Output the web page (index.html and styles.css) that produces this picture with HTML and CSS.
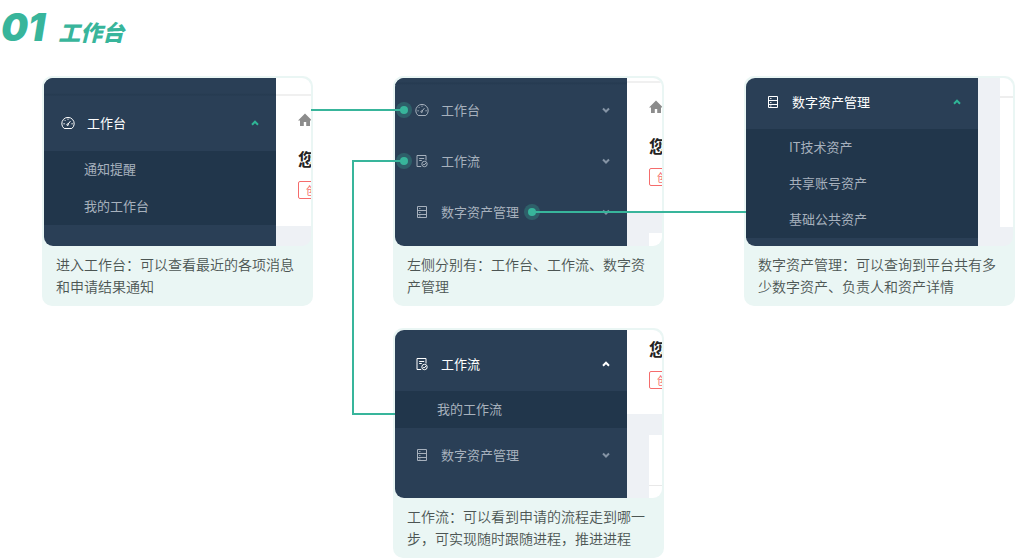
FILE: index.html
```html
<!DOCTYPE html>
<html lang="zh-CN">
<head>
<meta charset="utf-8">
<meta name="viewport" content="width=device-width, initial-scale=1">
<title>工作台</title>
<link rel="stylesheet" href="styles.css">
</head>
<body>
<svg class="defs" aria-hidden="true">
  <symbol id="gauge" viewBox="0 0 14 14"><path d="M3.2 12.5h7.6a6.2 6.2 0 1 0-7.6 0zM6.8 8.4l2.6-3.2M7 2.6v1.2M3.8 4.2l.8.8M2.4 7.8h1.4M10.4 7.8h1.4"/><circle cx="6.6" cy="8.7" r=".8"/></symbol>
  <symbol id="flow" viewBox="0 0 14 14"><path d="M6.2 12.5H2v-11h9v5M4.2 4.5h5M4.2 6.5h2.6"/><circle cx="9.5" cy="10" r="2.7"/><path d="M8.2 10l1 1 1.7-2"/></symbol>
  <symbol id="assets" viewBox="0 0 14 14"><path d="M2.5 1.5h9v11h-9zM2.5 5.5h9M2.5 9.5h9M4.2 3.5h1.2M4.2 7.5h1.2M4.2 11h1.2"/></symbol>
  <symbol id="down" viewBox="0 0 8 8"><path d="M1 2.5l3 3 3-3"/></symbol>
  <symbol id="up" viewBox="0 0 8 8"><path d="M1 5.7l3-3 3 3"/></symbol>
  <symbol id="home" viewBox="0 0 14 14"><path d="M7 .5L0 7.5h2V13h3.8V9h2.4v4H12V7.5h2z"/></symbol>
</svg>
<header class="heading">
  <span class="heading-number">01</span>
  <h1 class="heading-title">工作台</h1>
</header>
<main class="board">
  <article class="card">
    <div class="screen">
      <nav class="sidebar">
        <div class="strip strip-tall"></div>
        <button class="item item-medium active"><svg class="icon"><use href="#gauge"/></svg><span>工作台</span><svg class="arrow green"><use href="#up"/></svg></button>
        <div class="submenu"><a href="#">通知提醒</a><a href="#">我的工作台</a></div>
      </nav>
      <div class="content">
        <div class="topbar topbar-tall"></div>
        <div class="hero hero-first"><svg class="home"><use href="#home"/></svg><strong>您</strong><span class="tag">创</span></div>
      </div>
    </div>
    <p class="caption">进入工作台：可以查看最近的各项消息和申请结果通知</p>
  </article>

  <article class="card">
    <div class="screen">
      <nav class="sidebar">
        <div class="strip"></div>
        <button class="item"><svg class="icon"><use href="#gauge"/></svg><span>工作台</span><svg class="arrow"><use href="#down"/></svg></button>
        <button class="item"><svg class="icon"><use href="#flow"/></svg><span>工作流</span><svg class="arrow"><use href="#down"/></svg></button>
        <button class="item"><svg class="icon"><use href="#assets"/></svg><span>数字资产管理</span><svg class="arrow"><use href="#down"/></svg></button>
      </nav>
      <div class="content">
        <div class="topbar"></div>
        <div class="hero"><svg class="home"><use href="#home"/></svg><strong>您</strong><span class="tag">创</span></div>
        <div class="panel"></div>
      </div>
    </div>
    <p class="caption">左侧分别有：工作台、工作流、数字资产管理</p>
    <i class="wire wire-desk"></i>
    <i class="wire wire-flow"></i>
    <i class="wire-bend"></i>
    <i class="wire wire-assets"></i>
  </article>

  <article class="card">
    <div class="screen">
      <nav class="sidebar">
        <button class="item item-top active"><svg class="icon"><use href="#assets"/></svg><span>数字资产管理</span><svg class="arrow green"><use href="#up"/></svg></button>
        <div class="submenu submenu-three"><a href="#">IT技术资产</a><a href="#">共享账号资产</a><a href="#">基础公共资产</a></div>
      </nav>
      <div class="content">
        <div class="panel panel-long"></div>
      </div>
    </div>
    <p class="caption">数字资产管理：可以查询到平台共有多少数字资产、负责人和资产详情</p>
  </article>

  <article class="card card-flow">
    <div class="screen">
      <nav class="sidebar">
        <button class="item item-tall active"><svg class="icon"><use href="#flow"/></svg><span>工作流</span><svg class="arrow"><use href="#up"/></svg></button>
        <div class="submenu submenu-flow"><a href="#">我的工作流</a></div>
        <button class="item item-after"><svg class="icon"><use href="#assets"/></svg><span>数字资产管理</span><svg class="arrow"><use href="#down"/></svg></button>
      </nav>
      <div class="content">
        <div class="hero hero-last"><strong>您</strong><span class="tag">创</span></div>
        <div class="panel panel-split"></div>
      </div>
    </div>
    <p class="caption">工作流：可以看到申请的流程走到哪一步，可实现随时跟随进程，推进进程</p>
  </article>
</main>
</body>
</html>
```
FILE: styles.css
```css
:root {
  --green: #38b59b;
  --mint: #eaf6f4;
  --navy: #2a3f56;
  --deep: #21364b;
}

* { box-sizing: border-box; }

body {
  margin: 0;
  background: #fff;
  font-family: "Noto Sans CJK SC", sans-serif;
}

.defs { display: none; }

.heading {
  display: flex;
  align-items: baseline;
  gap: 13px;
  height: 76px;
  padding: 4px 0 0 1px;
  color: var(--green);
  font-style: italic;
  font-weight: 900;
  line-height: 46px;
}

.heading-number { font-family: Inter, sans-serif; font-size: 38px; }
.heading-title { margin: 0; font-size: 22px; font-weight: 900; }

.board {
  display: grid;
  grid-template-columns: repeat(3, minmax(0, 1fr));
  gap: 22px 80px;
  padding-left: 42px;
}

.card {
  position: relative;
  padding: 2px;
  border-radius: 10px;
  background: var(--mint);
}

.card-flow { grid-column: 2; }

.screen {
  display: flex;
  height: 168px;
  overflow: hidden;
  border-radius: 9px;
  background: #eef1f5;
}

.sidebar {
  flex: 0 0 232px;
  background: var(--navy);
}

.strip { height: 7px; background: linear-gradient(#2a3f56 4px, #253a50 5px, #2a3f56 7px); }
.strip-tall { height: 18px; background: linear-gradient(#2a3f56 15px, #253a50 17px, #2a3f56 18px); }

.item {
  display: flex;
  align-items: center;
  gap: 12px;
  width: 100%;
  height: 51px;
  padding: 0 17px 2px 20px;
  border: 0;
  background: none;
  color: #a7b1bd;
  font: 13px/20px "Noto Sans CJK SC", sans-serif;
  text-align: left;
}

.item.active { color: #fff; }
.item-medium { height: 55px; padding-left: 17px; }
.item-top { padding-bottom: 4px; }
.item-tall { height: 61px; padding-top: 6px; padding-bottom: 0; }
.item-after { height: 54px; padding-bottom: 0; }

.icon, .arrow {
  flex: none;
  fill: none;
  stroke: currentColor;
}

.icon { width: 14px; height: 14px; }
.arrow { width: 8px; height: 8px; margin-left: auto; stroke-width: 2; }
.item .green { color: #2fb596; }
.item:not(.active) .arrow { color: #8594a5; }

.submenu {
  display: grid;
  grid-auto-rows: 37px;
  padding-left: 40px;
  background: var(--deep);
}

.submenu a {
  color: #a7b1bd;
  font-size: 13px;
  line-height: 35px;
  text-decoration: none;
}

.submenu-three { grid-auto-rows: 36px; padding-bottom: 1px; padding-left: 43px; }
.submenu-flow { padding-left: 42px; }

.content {
  flex: 1;
  min-width: 0;
  overflow: hidden;
}

.topbar { height: 5px; border-bottom: 2px solid #f0f0f0; background: #fff; }
.topbar-tall { height: 18px; }

.hero {
  display: flex;
  flex-direction: column;
  align-items: flex-start;
  height: 129px;
  padding: 17px 0 0 22px;
  background: #fff;
}

.hero-first { height: 130px; }
.hero-last { height: 84px; padding-top: 7px; }
.home { flex: none; width: 14px; height: 14px; margin-bottom: 20px; fill: #8c8c8c; }

.hero strong {
  color: #222;
  font-size: 17px;
  font-weight: 700;
  line-height: 24px;
  white-space: nowrap;
}

.tag {
  margin-top: 10px;
  padding: 0 7px;
  border: 1px solid #f56c6c;
  border-radius: 2px;
  color: #f56c6c;
  font-size: 11px;
  line-height: 16px;
  white-space: nowrap;
}

.panel { height: 80px; margin: 21px 0 0 22px; background: #fff; }
.panel-long { height: 149px; margin-top: 0; background: linear-gradient(#fff 18px, #eee 18px, #eee 20px, #fff 20px); }
.panel-split { background: linear-gradient(#fff 50px, #e8e8e8 50px, #e8e8e8 51px, #fff 51px); }

.caption {
  margin: 0;
  padding: 7px 12px;
  color: #4c5553;
  font-size: 14px;
  font-weight: 350;
  line-height: 22px;
}

.wire { position: absolute; z-index: 1; height: 2px; background: var(--green); }

.wire::after {
  content: "";
  position: absolute;
  top: -3px;
  right: -4px;
  width: 8px;
  height: 8px;
  border-radius: 50%;
  background: var(--green);
  box-shadow: 0 0 0 4px rgba(56, 181, 155, .28);
}

.wire-desk { top: 33px; left: -82px; width: 93px; }
.wire-flow { top: 84px; left: -41px; width: 52px; }
.wire-assets { top: 135px; right: -82px; left: 139px; }
.wire-assets::after { right: auto; left: -4px; }

.wire-bend {
  position: absolute;
  z-index: 1;
  top: 84px;
  left: -41px;
  width: 43px;
  height: 255px;
  border: solid var(--green);
  border-width: 0 0 2px 2px;
}
```
